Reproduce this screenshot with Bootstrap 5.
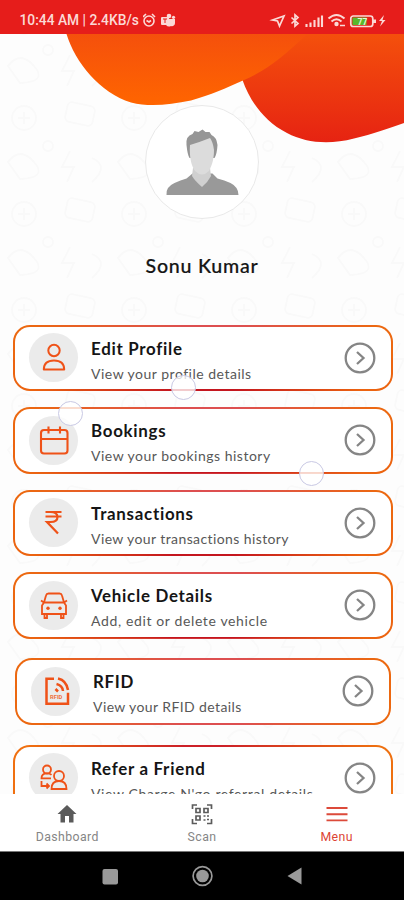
<!DOCTYPE html>
<html lang="en">
<head>
<meta charset="utf-8">
<meta name="viewport" content="width=device-width, initial-scale=1">
<title>Menu</title>
<link href="https://cdn.jsdelivr.net/npm/bootstrap@5.3.0/dist/css/bootstrap.min.css" rel="stylesheet">
<style>
body{height:900px;overflow:hidden;font-family:Lato,"Liberation Sans",sans-serif;background:#fdfdfd}
svg{display:block;flex:none}
.status{height:34px;background:#e61d1b;color:#fbd9d6;font:500 13.8px/20px Roboto,sans-serif;padding:10px 18px 0 19.5px}
.status svg{margin-top:.5px}
.hero{height:290.5px}
.deco{position:absolute;left:0;top:0;z-index:-1}
.avatar{width:114px;height:114px;margin-top:71px;background:#fff;border:1px solid #e9e9e9}
.person{font-size:19.6px;line-height:24px;font-weight:500;margin-top:35px;color:#151515;-webkit-text-stroke:.2px #151515;letter-spacing:.75px;white-space:nowrap}
.tiles{padding:0 11.5px 0 12.5px;gap:16px}
.tile{height:66.5px;border:2.4px solid transparent;border-radius:17px;padding:0 15px 0 14.5px;
 background:linear-gradient(#fff,#fff) padding-box,linear-gradient(90deg,#ec6810 4%,#dd4f50 45%,#dd4f50 60%,#ec6810 96%) border-box;color:#151515;text-decoration:none}
.tile.deep{background:linear-gradient(#fff,#fff) padding-box,linear-gradient(90deg,#ec6410 5%,#c4161f 42%,#c4161f 58%,#ec6410 92%) 0 100%/100% 50% no-repeat border-box,linear-gradient(90deg,#ec6810 4%,#dd4f50 45%,#dd4f50 60%,#ec6810 96%) border-box}
.tile.inset{margin:3.5px 2px 4px 2px}
.tile.crimson{background:linear-gradient(#fff,#fff) padding-box,linear-gradient(90deg,#f07010 4%,#cc2028 45%,#cc2028 55%,#ee7010 96%) border-box}
.disc{width:49px;height:49px;background:#ebebeb}
.copy{margin-left:13px;padding-top:6px;white-space:nowrap}
.name{font-size:16.9px;line-height:20px;font-weight:700;letter-spacing:.72px}
.hint{font-size:14px;line-height:18px;margin-top:6px;color:#585858;letter-spacing:.5px}
.hint.snug{letter-spacing:.4px}
.hint.airy{letter-spacing:.63px}
.touch{position:absolute;width:25px;height:25px;border:1px solid #c9c9e4;background:rgba(255,255,255,.78);z-index:3}
.touch.t1{left:170.500px;top:375px}
.touch.t2{left:58px;top:401px}
.touch.t3{left:299px;top:461px}
.tabs{height:58px;background:#fff;z-index:4;font:400 12.3px/16px Roboto,sans-serif;color:#858585;border-bottom:1px solid #777}
.tabs a{color:inherit;text-decoration:none;width:135px;padding-top:9px}
.tabs a.current{color:#dc4434}
.tabs span{margin-top:4px;letter-spacing:.4px}
.keys{height:48px;background:#000}
</style>
<script src="https://cdn.jsdelivr.net/npm/bootstrap@5.3.0/dist/js/bootstrap.bundle.min.js"></script>
</head>
<body class="d-flex flex-column position-relative m-0">
<header class="status d-flex align-items-start flex-shrink-0">
 <span class="text-nowrap">10:44 AM | 2.4KB/s</span>
 <svg class="ms-1" width="36" height="20" viewBox="1 1 36 20" fill="none" stroke="#fbd9d6" stroke-width="1.600"><circle cx="7" cy="11" r="5"/><path d="M1 7l3-3M10 4l3 3M4.500 10.500l2.500 1.500 2-1.500"/><g fill="#fbd9d6" stroke="none"><rect x="19" y="7" width="8" height="8" rx="1"/><circle cx="27" cy="6" r="2.300"/><circle cx="31.500" cy="7.300" r="1.600"/><path d="M24 9h9v4a3 3 0 0 1-4 3 4 4 0 0 1-5-1z"/></g><path d="M21 9h4M23 9v4" stroke="#e61d1b" stroke-width="1"/></svg>
 <svg class="ms-auto" width="118" height="20" viewBox="-1 3 118 20" fill="none" stroke="#fbd9d6" stroke-width="1.700"><path d="M3.500 12L15 8l-4.500 10-2-5z"/><path d="M22.500 9.500l6.500 6-3 2.700V6.800l3 2.700-6.500 6" /><g stroke-width="2.100"><path d="M37.500 19v-3M41.500 19v-4.500M45.500 19v-7M49.500 19v-9.500M53 19V7.500"/></g><g stroke-width="2"><path d="M59.500 10.500q8-7 16 0M62.500 13.500q5-4.500 10 0"/><circle cx="67.500" cy="16" r="1.200" fill="#fbd9d6"/><path d="M71 17.500h5" stroke-width="1.500"/></g><rect x="81.800" y="8" width="22" height="10.500" rx="2.500"/><rect x="83.500" y="9.500" width="14" height="7.500" fill="#59b82c" stroke="none"/><path d="M105.500 11.500v3.500" stroke-width="3"/><text x="88.500" y="16.500" font-size="8.500" font-family="Roboto" font-weight="700" fill="#e6f5d9" stroke="none">77</text><path d="M115 7l-5 6h3l-2 5.500 5.500-6.500h-3z" fill="#fbd9d6" stroke="none"/></svg>
</header>

<main class="flex-grow-1 overflow-hidden position-relative z-0">
 <svg class="deco" width="404" height="760" viewBox="0 34 404 760">
  <defs>
   <linearGradient id="amber" x1="0" y1="0" x2="0" y2="1"><stop offset="0" stop-color="#f5500c"/><stop offset="1" stop-color="#ff6500"/></linearGradient>
   <linearGradient id="ember" x1="0" y1="0" x2="0" y2="1"><stop offset="0" stop-color="#f4500c"/><stop offset="1" stop-color="#e62312"/></linearGradient>
   <pattern id="doodle" width="110" height="96" patternUnits="userSpaceOnUse"><g fill="none" stroke="#f9f9f9" stroke-width="1.800"><circle cx="24" cy="22" r="12"/><path d="M18 22h12M24 16v12"/><rect x="66" y="8" width="28" height="20" rx="5" transform="rotate(12 80 18)"/><path d="M8 66q12-16 26 0t-14 17zM70 55l-8 16h12l-7 15M92 62q18 8 0 24"/><circle cx="48" cy="50" r="5"/></g></pattern>
  </defs>
  <rect y="34" width="404" height="760" fill="url(#doodle)"/>
  <path d="M242.500 80C249 99 263 121 287 133C306 143 329 145 354 138.500C373 134 389 128 404 123V34H230z" fill="url(#ember)"/>
  <path d="M66.500 34C75 62 100 93 131 102.500C149 107 169 105 191 100.500C211 95 226 88 243 80.500C267 70 283 57 307 34z" fill="url(#amber)"/>
 </svg>
 <section class="hero d-flex flex-column align-items-center flex-shrink-0">
  <div class="avatar rounded-circle d-flex justify-content-center">
   <svg width="112" height="112" viewBox="146 106 112 112"><path d="M166.500 195q-1-8 8-12 6-3 12-4.500l6-5h20l5 5q7 1.500 13 4.500 8 4 8 12z" fill="#999"/><path d="M193 168l-1 8q3 5 10 11 6-5 9-11l-1-8z" fill="#d0d0d0"/><path d="M189.500 158q-2-3-3-13-1-9 6-11l2-3 4 1 4-2.500 3 2.500 4 0 2 3q5 2 6 10-.5 9-3 13z" fill="#969696"/><path d="M190 145q10-3 20-7 3 4 4 12c0 11-3 17-5 21q-7 7-14 0c-3-4-6-13-5-26z" fill="#dcdcdc"/></svg>
  </div>
  <h1 class="person mb-0">Sonu Kumar</h1>
 </section>

 <nav class="tiles d-flex flex-column">
  <a class="tile deep d-flex align-items-center flex-shrink-0" href="#">
   <span class="disc rounded-circle"><svg width="49" height="49" viewBox="0 0 49 49" fill="none" stroke="#ef5218" stroke-width="2"><circle cx="25" cy="17.500" r="5.700"/><path d="M14.800 36.500q0-9 10.200-9t10.200 9z" stroke-linejoin="round"/></svg></span>
   <span class="copy"><span class="name d-block">Edit Profile</span><span class="hint d-block">View your profile details</span></span>
   <svg class="ms-auto" width="32" height="32" viewBox="0 0 32 32" fill="none" stroke="#858585" stroke-width="2.300"><circle cx="16" cy="16" r="14.300"/><path d="M13 10l6.500 6-6.500 6"/></svg>
  </a>
  <a class="tile deep d-flex align-items-center flex-shrink-0" href="#">
   <span class="disc rounded-circle"><svg width="49" height="49" viewBox="0 0 49 49" fill="none" stroke="#ef5218" stroke-width="2.100"><rect x="12" y="14" width="26.500" height="23.500" rx="3"/><path d="M12 23h26.500M19.500 10.500v7M31 10.500v7"/></svg></span>
   <span class="copy"><span class="name d-block">Bookings</span><span class="hint d-block">View your bookings history</span></span>
   <svg class="ms-auto" width="32" height="32" viewBox="0 0 32 32" fill="none" stroke="#858585" stroke-width="2.300"><circle cx="16" cy="16" r="14.300"/><path d="M13 10l6.500 6-6.500 6"/></svg>
  </a>
  <a class="tile deep d-flex align-items-center flex-shrink-0" href="#">
   <span class="disc rounded-circle"><svg width="49" height="49" viewBox="0 0 49 49" fill="none" stroke="#ef5218" stroke-width="2.200"><path d="M16.500 14h16M16.500 18.500h16M16.500 14h5q7 0 7 5t-7 5h-3.500l11 11.500"/></svg></span>
   <span class="copy"><span class="name d-block">Transactions</span><span class="hint snug d-block">View your transactions history</span></span>
   <svg class="ms-auto" width="32" height="32" viewBox="0 0 32 32" fill="none" stroke="#858585" stroke-width="2.300"><circle cx="16" cy="16" r="14.300"/><path d="M13 10l6.500 6-6.500 6"/></svg>
  </a>
  <a class="tile deep d-flex align-items-center flex-shrink-0" href="#">
   <span class="disc rounded-circle"><svg width="49" height="49" viewBox="0 0 49 49" fill="none" stroke="#ef5218" stroke-width="1.800"><path d="M15 21.500l2-7q.5-2 2.500-2h11q2 0 2.500 2l2 7M12 19.500l3 2h20l3-2M15 21.500l-2 3v8.500h24v-8.500l-2-3M15.500 33v4h2.500v-4M32 33v4h2.500v-4"/><g fill="#ef5218" stroke="none"><circle cx="19" cy="27.300" r="1.700"/><circle cx="31" cy="27.300" r="1.700"/></g></svg></span>
   <span class="copy"><span class="name d-block">Vehicle Details</span><span class="hint airy d-block">Add, edit or delete vehicle</span></span>
   <svg class="ms-auto" width="32" height="32" viewBox="0 0 32 32" fill="none" stroke="#858585" stroke-width="2.300"><circle cx="16" cy="16" r="14.300"/><path d="M13 10l6.500 6-6.500 6"/></svg>
  </a>
  <a class="tile inset d-flex align-items-center flex-shrink-0" href="#">
   <span class="disc rounded-circle"><svg width="49" height="49" viewBox="0 0 49 49" fill="none" stroke="#ef5218" stroke-width="2.500"><path d="M23 11.800h-7.500v25h21.500v-11M27 11.500q8.500 2 10 11.500M25.500 17q6 1.500 6.500 7M24.500 22l2.500 2.500"/><text x="19" y="32.300" font-size="5.800" font-family="Roboto" font-weight="700" fill="#ef7040" stroke="none">RFID</text></svg></span>
   <span class="copy"><span class="name d-block">RFID</span><span class="hint snug d-block">View your RFID details</span></span>
   <svg class="ms-auto" width="32" height="32" viewBox="0 0 32 32" fill="none" stroke="#858585" stroke-width="2.300"><circle cx="16" cy="16" r="14.300"/><path d="M13 10l6.500 6-6.500 6"/></svg>
  </a>
  <a class="tile crimson d-flex align-items-center flex-shrink-0" href="#">
   <span class="disc rounded-circle"><svg width="49" height="49" viewBox="0 0 49 49" fill="none" stroke="#ef5218" stroke-width="1.800"><circle cx="18" cy="16.500" r="4"/><path d="M22 25.300h-9.500q0-5 5.500-5 3 0 4.500 1.500"/><circle cx="30" cy="23" r="5"/><path d="M22.500 36q0-8 7.500-8t7.500 8zM12.500 28v5h7M17.500 30.500l2.500 2.500-2.500 2.500"/></svg></span>
   <span class="copy"><span class="name d-block">Refer a Friend</span><span class="hint airy d-block">View Charge N'go referral details</span></span>
   <svg class="ms-auto" width="32" height="32" viewBox="0 0 32 32" fill="none" stroke="#858585" stroke-width="2.300"><circle cx="16" cy="16" r="14.300"/><path d="M13 10l6.500 6-6.500 6"/></svg>
  </a>
 </nav>
</main>

<i class="touch t1 rounded-circle"></i>
<i class="touch t2 rounded-circle"></i>
<i class="touch t3 rounded-circle"></i>

<nav class="tabs d-flex flex-shrink-0">
 <a href="#" class="d-flex flex-column align-items-center"><svg width="24" height="22" viewBox="0 0 24 22"><path d="M12 2L2.500 11h3v8.500H10V13h4v6.500h4.500V11h3z" fill="#5a5a5a"/></svg><span>Dashboard</span></a>
 <a href="#" class="d-flex flex-column align-items-center"><svg width="24" height="22" viewBox="0 0 24 22" fill="none" stroke="#5c5c5c" stroke-width="1.700"><path d="M2.500 6V2H7M17 2h4.500v4M2.500 16v4.500H7M17 20.500h4.500V16M6 5.500h4v4H6zM14 5.500h4v4h-4zM6 13h4v4H6zM13.500 13h2M17 13h2M13.500 17h2M17 16.500h2"/></svg><span>Scan</span></a>
 <a href="#" class="current d-flex flex-column align-items-center"><svg width="24" height="22" viewBox="0 0 24 22" stroke="#dc4a3a" stroke-width="1.900"><path d="M1.500 5h21M1.500 11.200h21M1.500 17.400h21"/></svg><span>Menu</span></a>
</nav>
<footer class="keys flex-shrink-0">
 <svg width="404" height="48" viewBox="0 852 404 48" fill="#999"><rect x="102.500" y="869" width="15.500" height="15.500" rx="2"/><circle cx="202.500" cy="876" r="6.300"/><circle cx="202.500" cy="876" r="9.400" fill="none" stroke="#999" stroke-width="1.700"/><path d="M287.500 876l14-8.500v17z"/></svg>
</footer>
</body>
</html>
